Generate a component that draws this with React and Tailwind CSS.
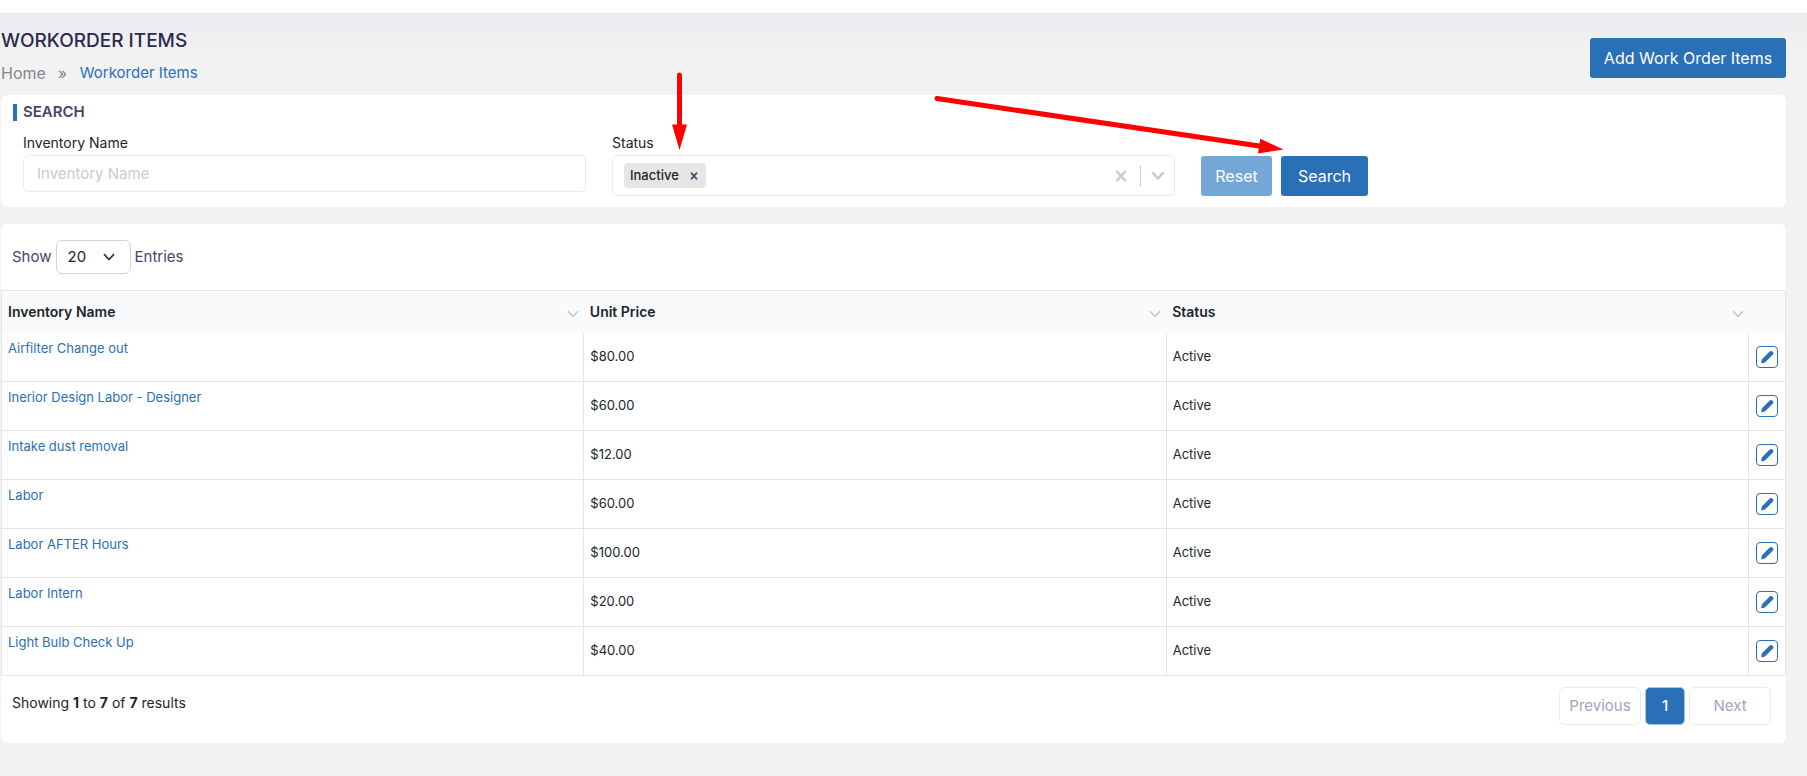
import React from "react";

const items = [
  { name: "Airfilter Change out", price: "$80.00" },
  { name: "Inerior Design Labor - Designer", price: "$60.00" },
  { name: "Intake dust removal", price: "$12.00" },
  { name: "Labor", price: "$60.00" },
  { name: "Labor AFTER Hours", price: "$100.00" },
  { name: "Labor Intern", price: "$20.00" },
  { name: "Light Bulb Check Up", price: "$40.00" },
];

function Cross({ className }) {
  return (
    <svg viewBox="0 0 12 12" className={className} fill="none" stroke="currentColor" strokeWidth="2.6" aria-hidden="true">
      <path d="M1.5 1 10.5 11M10.5 1 1.5 11" />
    </svg>
  );
}

function Chevron({ className, weight }) {
  return (
    <svg viewBox="0 0 12 8" className={className} fill="none" stroke="currentColor" strokeWidth={weight} aria-hidden="true">
      <path d="M1 1.2 6 6.5 11 1.2" />
    </svg>
  );
}

function Pencil() {
  return (
    <svg viewBox="0 0 14 14" className="size-3.5" fill="currentColor" aria-hidden="true">
      <path d="M9.4 1.7Q11 .3 12.6 1.7T12.8 4.7L5.4 12Q4.600 12.700 3.600 12.900L1.200 13.300 1.500 11Q1.700 9.700 2.500 8.700Z" />
    </svg>
  );
}

function HeaderCell({ children }) {
  return (
    <th className="py-0 pl-1.5 pr-[5px] text-left font-semibold">
      <div className="flex items-center justify-between">
        <span>{children}</span>
        <button type="button" aria-label={`Sort by ${children}`} className="pt-1 text-[#b4b7bd]">
          <Chevron className="h-2 w-3" weight="1.1" />
        </button>
      </div>
    </th>
  );
}

function Arrows() {
  return (
    <svg className="pointer-events-none absolute left-0 top-0 h-[200px] w-[1400px]" viewBox="0 0 1400 200" aria-hidden="true">
      <g stroke="#ff0000" strokeWidth="5" strokeLinecap="round" fill="none">
        <path d="M679.5 75V127" />
        <path d="M937 98.5 1261 146.2" />
      </g>
      <path d="M672 124.500H687L679.500 150ZM1260.300 138.800 1283.500 149.500 1258 153.400Z" fill="#ff0000" />
    </svg>
  );
}

export default function App() {
  return (
    <div className="relative min-h-screen bg-[#f2f2f2] font-['Inter',sans-serif] text-[#212529]">
      <div className="h-[13px] bg-white" />
      <div className="h-10 bg-linear-to-b from-[#ebebef] to-[#f2f2f2]" />
      <main className="-mt-10 pl-px pr-[21px]">
        <header className="flex h-[82px] items-start justify-between">
          <div>
            <h1 className="mt-3.5 text-[19px] leading-7 font-medium text-[#2c2a4f]">WORKORDER ITEMS</h1>
            <nav aria-label="Breadcrumb" className="mt-1 flex items-center leading-7">
              <a href="#" className="text-[16px] text-[#85858f]">Home</a>
              <span className="mx-3 w-2.5 text-[16px] text-[#85858f]">»</span>
              <a href="#" className="text-[15px] text-[#2a70b7]">Workorder Items</a>
            </nav>
          </div>
          <button type="button" className="mt-[25px] h-10 w-[196px] rounded-[3px] bg-[#2a70b7] text-[16px] text-white">
            Add Work Order Items
          </button>
        </header>

        <section className="h-28 rounded-md bg-white px-[9px] pt-[9px]">
          <h2 className="ml-[3px] flex h-[17px] items-center border-l-4 border-[#2a70b7] pl-1.5 text-[15px] font-semibold text-[#464569]">
            SEARCH
          </h2>
          <form className="mt-3 grid grid-cols-3" onSubmit={(e) => e.preventDefault()}>
            <div className="px-[13px]">
              <label htmlFor="inventory-name" className="block pb-0.5 text-[14px] leading-5">Inventory Name</label>
              <input
                id="inventory-name"
                type="text"
                placeholder="Inventory Name"
                className="h-[37px] w-full rounded-[5px] border border-[#ebebf5] px-[13px] text-[15px] outline-none placeholder:text-[#cbc9d2]"
              />
            </div>
            <div className="px-[13px]">
              <label htmlFor="status" className="block pb-0.5 text-[14px] leading-5">Status</label>
              <div className="flex h-[41px] items-center rounded-[5px] border border-[#ebebf5] pl-[11px] pr-[9px]">
                <span className="flex h-[25px] items-center gap-[11px] rounded-sm bg-[#e6e6e6] pl-1.5 pr-2 text-[13px] font-medium">
                  Inactive
                  <button type="button" aria-label="Remove Inactive" className="text-[#44506d]">
                    <Cross className="size-2" />
                  </button>
                </span>
                <input id="status" type="text" role="combobox" aria-expanded="false" className="h-8 min-w-0 flex-1 outline-none" />
                <button type="button" aria-label="Clear status" className="text-[#cccccc]">
                  <Cross className="size-3" />
                </button>
                <span className="ml-[13px] mr-2.5 h-[22px] w-px bg-[#cccccc]" />
                <button type="button" aria-label="Open status list" className="text-[#cccccc]">
                  <Chevron className="h-[9px] w-3.5" weight="2.400" />
                </button>
              </div>
            </div>
            <div className="flex gap-[9px] px-[13px] pt-[23px] text-[16px] text-white">
              <button type="reset" className="h-10 w-[71px] rounded-[3px] bg-[#73a8d6]">Reset</button>
              <button type="submit" className="h-10 w-[87px] rounded-[3px] bg-[#2a70b7]">Search</button>
            </div>
          </form>
        </section>

        <section className="mt-[17px] h-[519px] rounded-md bg-white">
          <div className="flex h-[66px] items-center pl-[11px] text-[15px] text-[#464569]">
            <label htmlFor="page-size">Show</label>
            <div className="relative mx-1">
              <select id="page-size" defaultValue="20" className="h-[34px] w-[75px] appearance-none rounded-md border border-[#ced4da] bg-white pl-[11px] text-[15px] text-[#212529]">
                <option>20</option>
                <option>50</option>
                <option>100</option>
              </select>
              <Chevron className="pointer-events-none absolute right-4 top-[13px] h-2 w-3 text-[#343a40]" weight="1.800" />
            </div>
            <span>Entries</span>
          </div>

          <table className="w-full table-fixed border-collapse border border-[#e4e4e8] text-[13px]">
            <colgroup>
              <col />
              <col />
              <col />
              <col className="w-[37px]" />
            </colgroup>
            <thead>
              <tr className="h-[42px] bg-[#f8fafc] text-[14px]">
                <HeaderCell>Inventory Name</HeaderCell>
                <HeaderCell>Unit Price</HeaderCell>
                <HeaderCell>Status</HeaderCell>
                <th aria-label="Actions" />
              </tr>
            </thead>
            <tbody>
              {items.map((item) => (
                <tr key={item.name} className="h-[49px] border-b border-[#e4e4e8]">
                  <td className="border-r border-[#e4e4e8] pl-1.5 pt-1.5 align-top">
                    <a href="#" className="text-[#2a70b7]">{item.name}</a>
                  </td>
                  <td className="border-r border-[#e4e4e8] pl-1.5">{item.price}</td>
                  <td className="border-r border-[#e4e4e8] pl-1.5">Active</td>
                  <td className="p-0">
                    <button
                      type="button"
                      aria-label={`Edit ${item.name}`}
                      className="mx-auto flex size-[22px] items-center justify-center rounded-sm border border-[#2a70b7] text-[#2a70b7]"
                    >
                      <Pencil />
                    </button>
                  </td>
                </tr>
              ))}
            </tbody>
          </table>

          <div className="flex items-start justify-between pl-[11px] pr-[15px] pt-[11px]">
            <p className="pt-1 text-[14px] leading-6">
              Showing <b>1</b> to <b>7</b> of <b>7</b> results
            </p>
            <nav aria-label="Pagination" className="flex gap-1 text-[15px] text-[#a5a3b8]">
              <button type="button" className="h-[38px] w-[82px] rounded-[5px] border border-[#ebebf5]">Previous</button>
              <button type="button" aria-current="page" className="h-[38px] w-10 rounded-[5px] border border-[#a9c6e2] bg-[#2a70b7] font-medium text-white">1</button>
              <button type="button" className="h-[38px] w-[82px] rounded-[5px] border border-[#ebebf5]">Next</button>
            </nav>
          </div>
        </section>
      </main>
      <Arrows />
    </div>
  );
}
